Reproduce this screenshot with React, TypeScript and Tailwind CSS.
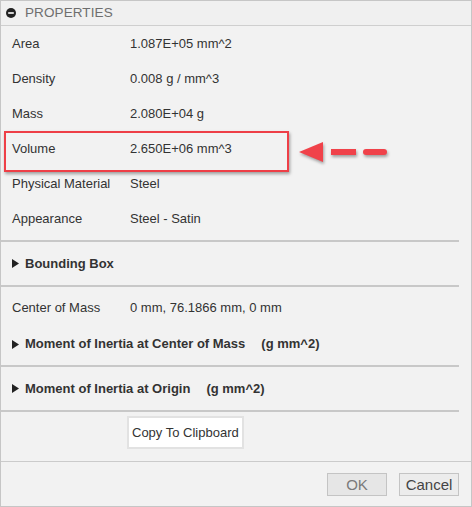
import React from 'react';

const ROWS: [string, string][] = [
  ['Area', '1.087E+05 mm^2'],
  ['Density', '0.008 g / mm^3'],
  ['Mass', '2.080E+04 g'],
  ['Volume', '2.650E+06 mm^3'],
  ['Physical Material', 'Steel'],
  ['Appearance', 'Steel - Satin'],
];

const Caret = () => (
  <svg width="7" height="9" viewBox="0 0 7 9" className="shrink-0">
    <path d="M0 0 L7 4.5 L0 9 Z" fill="#222" />
  </svg>
);

const Separator = () => <div className="h-[2px] bg-[#c8c8c8] mr-[12px]" />;

const Section = ({ title, unit }: { title: string; unit?: string }) => (
  <div className="flex items-center gap-[6px] pl-[11px] font-bold text-[#333]">
    <Caret />
    <span>{title}</span>
    {unit && <span className="ml-[10px]">{unit}</span>}
  </div>
);

const PropRow = ({ label, value }: { label: string; value: string }) => (
  <div className="flex items-center h-[35px] pl-[11px]">
    <span className="w-[118px] shrink-0">{label}</span>
    <span>{value}</span>
  </div>
);

const App: React.FC = () => {
  return (
    <div
      className="relative w-[472px] h-[507px] bg-[#f2f2f2] border border-[#c6c6c6] flex flex-col text-[13px] text-[#333]"
      style={{ fontFamily: '"Liberation Sans", Arial, sans-serif' }}
    >
      {/* header */}
      <div className="h-[25px] flex items-center gap-[9px] pl-[5px] bg-[#f0f0f0] border-b border-[#cfcfcf] shrink-0">
        <svg width="10" height="10" viewBox="0 0 10 10">
          <circle cx="5" cy="5" r="5" fill="#222" />
          <rect x="2.2" y="4.2" width="5.6" height="1.6" fill="#fff" />
        </svg>
        <span className="text-[#6e6e6e] text-[13.5px] tracking-[0.1px]">PROPERTIES</span>
      </div>

      {/* basic properties */}
      <div className="flex flex-col">
        {ROWS.map(([l, v]) => (
          <PropRow key={l} label={l} value={v} />
        ))}
      </div>

      <div className="mt-[4px]">
        <Separator />
      </div>
      <div className="h-[43px] flex items-center">
        <Section title="Bounding Box" />
      </div>
      <Separator />

      <div className="pt-[3px] pb-[3px]">
        <div className="flex items-center h-[36px] pl-[11px]">
          <span className="w-[118px] shrink-0">Center of Mass</span>
          <span>0 mm, 76.1866 mm, 0 mm</span>
        </div>
        <div className="h-[36px] flex items-center">
          <Section title="Moment of Inertia at Center of Mass" unit="(g mm^2)" />
        </div>
      </div>
      <Separator />

      <div className="h-[43px] flex items-center">
        <Section title="Moment of Inertia at Origin" unit="(g mm^2)" />
      </div>
      <Separator />

      <div className="flex-1 pl-[126px] pt-[4px]">
        <button className="h-[33px] px-[3px] bg-white border-2 border-[#e2e2e2] text-[13px] text-[#333]">
          Copy To Clipboard
        </button>
      </div>

      {/* footer */}
      <div className="h-[45px] border-t border-[#cbcbcb] flex justify-end items-start gap-[12px] pt-[11px] pr-[12px] shrink-0">
        <button className="w-[60px] h-[23px] bg-[#e6e6e6] border border-[#c4c4c4] text-[15px] text-[#7a7a7a] leading-none">
          OK
        </button>
        <button className="w-[60px] h-[23px] bg-[#ececec] border border-[#c4c4c4] text-[15px] text-[#444] leading-none">
          Cancel
        </button>
      </div>

      {/* annotation */}
      <div className="absolute left-[3px] top-[130px] w-[285px] h-[41px] border-2 border-[#ee3f47] shadow-[1px_2px_3px_rgba(0,0,0,0.35)]" />
      <svg
        className="absolute left-[296px] top-[140px]"
        width="94"
        height="26"
        viewBox="0 0 94 26"
        style={{ filter: 'drop-shadow(1px 2px 1.5px rgba(0,0,0,0.35))' }}
      >
        <path d="M2 11 L26 1 L26 21 Z" fill="#f0424a" />
        <rect x="34" y="8" width="25" height="6" fill="#f0424a" />
        <rect x="66" y="8" width="24" height="6" rx="3" fill="#f0424a" />
      </svg>
    </div>
  );
};

export default App;
